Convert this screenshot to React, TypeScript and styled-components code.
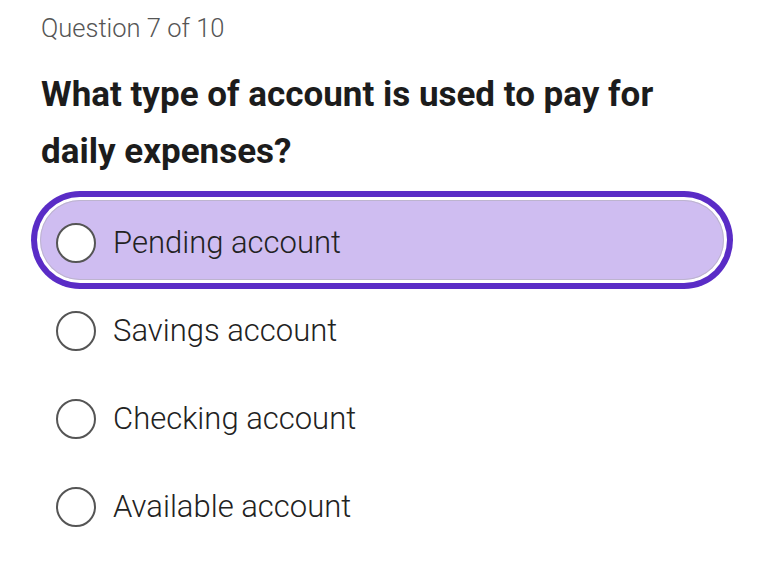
import styled, { createGlobalStyle } from 'styled-components'

const GlobalStyle = createGlobalStyle`
  html, body {
    margin: 0;
    padding: 0;
    background: #ffffff;
  }
  body {
    font-family: Roboto, "Liberation Sans", sans-serif;
  }
`

const Page = styled.main`
  width: 760px;
  height: 570px;
  box-sizing: border-box;
  padding: 12px 36px 0 40px;
  overflow: hidden;
`

const Progress = styled.div`
  padding-left: 1px;
  font-size: 25.5px;
  line-height: 32px;
  font-weight: 300;
  color: #555555;
`

const Title = styled.h1`
  margin: 22px 0 0;
  padding-left: 1px;
  font-size: 35px;
  line-height: 57px;
  font-weight: 700;
  color: #1c1c1c;
`

const Options = styled.ul`
  list-style: none;
  margin: 20px 0 0;
  padding: 0;
  display: flex;
  flex-direction: column;
  gap: 8px;
`

const Option = styled.li<{ $selected?: boolean }>`
  height: 80px;
  box-sizing: border-box;
  padding: 6px 16px 0;
  display: flex;
  align-items: center;
  gap: 17px;
  border-radius: 999px;
  background: ${p => (p.$selected ? '#cfbdf1' : 'transparent')};
  box-shadow: ${p =>
    p.$selected
      ? 'inset 0 0 0 1px #bdb4cf, 0 0 0 3px #ffffff, 0 0 0 9px #5a2cc6'
      : 'none'};
  cursor: pointer;
`

const Radio = styled.span`
  flex: none;
  width: 40px;
  height: 40px;
  box-sizing: border-box;
  border: 2px solid #555555;
  border-radius: 50%;
  background: #ffffff;
`

const Label = styled.span`
  font-size: 31px;
  line-height: 36px;
  font-weight: 300;
  color: #222222;
`

const answers = [
  'Pending account',
  'Savings account',
  'Checking account',
  'Available account',
]

export default function App() {
  return (
    <>
      <GlobalStyle />
      <Page>
        <Progress>Question 7 of 10</Progress>
        <Title>
          What type of account is used to pay for
          <br />
          daily expenses?
        </Title>
        <Options>
          {answers.map((a, i) => (
            <Option key={a} $selected={i === 0}>
              <Radio />
              <Label>{a}</Label>
            </Option>
          ))}
        </Options>
      </Page>
    </>
  )
}
